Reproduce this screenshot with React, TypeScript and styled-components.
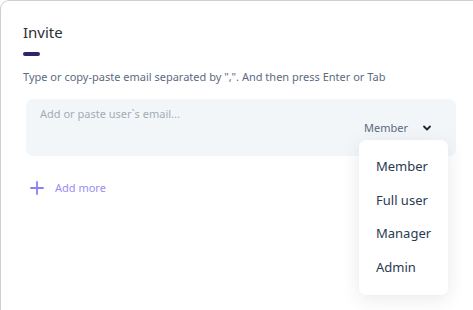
import styled, { createGlobalStyle } from 'styled-components';

const GlobalStyle = createGlobalStyle`
  html, body {
    margin: 0;
    padding: 0;
    background: #ffffff;
    overflow: hidden;
  }
  body {
    font-family: 'Noto Sans', 'Open Sans', sans-serif;
  }
`;

const roles = ['Member', 'Full user', 'Manager', 'Admin'];

const Chevron = () => (
  <svg width="10" height="10" viewBox="0 0 10 10" aria-hidden="true">
    <path
      d="M2 3.5 L5 6.5 L8 3.5"
      fill="none"
      stroke="#1f2633"
      strokeWidth="1.8"
      strokeLinecap="round"
      strokeLinejoin="round"
    />
  </svg>
);

const Plus = () => (
  <svg width="14" height="14" viewBox="0 0 14 14" aria-hidden="true">
    <path
      d="M7 1 V13 M1 7 H13"
      stroke="#8c7ff2"
      strokeWidth="1.8"
      strokeLinecap="round"
    />
  </svg>
);

const App = () => {
  return (
    <>
      <GlobalStyle />
      <Card>
        <Title>Invite</Title>
        <Accent />
        <Hint>
          Type or copy-paste email separated by ",". And then press Enter or Tab
        </Hint>
        <EmailBox>
          <Placeholder>Add or paste user`s email...</Placeholder>
          <RoleSelect>
            <RoleLabel>Member</RoleLabel>
            <Chevron />
          </RoleSelect>
          <Menu>
            {roles.map((role) => (
              <MenuItem key={role}>{role}</MenuItem>
            ))}
          </Menu>
        </EmailBox>
        <AddMore>
          <Plus />
          <span>Add more</span>
        </AddMore>
      </Card>
    </>
  );
};

// the card continues past the right and bottom edges of the frame
const Card = styled.div`
  box-sizing: border-box;
  width: 473px;
  height: 310px;
  border: 1px solid #cfcfcf;
  border-right: none;
  border-bottom: none;
  border-top-left-radius: 9px;
  padding: 20px 0 0 22px;
`;

const Title = styled.h1`
  margin: 0;
  font-size: 15px;
  font-weight: 400;
  line-height: 22px;
  color: #2b2f36;
`;

const Accent = styled.div`
  width: 17px;
  height: 4px;
  border-radius: 2px;
  background: #2d2766;
  margin-top: 9px;
`;

const Hint = styled.p`
  margin: 13px 0 0;
  font-size: 11px;
  line-height: 16px;
  color: #5c6b7f;
`;

const EmailBox = styled.div`
  position: relative;
  box-sizing: border-box;
  width: 430px;
  height: 57px;
  margin: 14px 0 0 3px;
  padding: 7px 14px 0;
  background: #f3f6f9;
  border-radius: 7px;
  display: flex;
  flex-direction: column;
`;

const Placeholder = styled.div`
  font-size: 11px;
  line-height: 16px;
  color: #a3abb5;
`;

const RoleSelect = styled.div`
  align-self: flex-end;
  display: flex;
  align-items: center;
  gap: 14px;
  margin: -2px 10px 0 0;
`;

const RoleLabel = styled.span`
  font-size: 11px;
  line-height: 16px;
  color: #5b6a7e;
`;

const Menu = styled.ul`
  position: absolute;
  top: 41px;
  right: 8px;
  box-sizing: border-box;
  width: 89px;
  margin: 0;
  padding: 16px 0 0;
  height: 155px;
  list-style: none;
  background: #ffffff;
  border-radius: 7px;
  box-shadow: 0 4px 18px rgba(30, 40, 60, 0.1);
`;

const MenuItem = styled.li`
  padding-left: 17px;
  font-size: 13px;
  line-height: 20px;
  height: 33.5px;
  color: #2a3a52;
`;

const AddMore = styled.div`
  display: flex;
  align-items: center;
  gap: 11px;
  margin: 24px 0 0 7px;
  font-size: 11px;
  color: #9a8df3;
`;

export default App;
